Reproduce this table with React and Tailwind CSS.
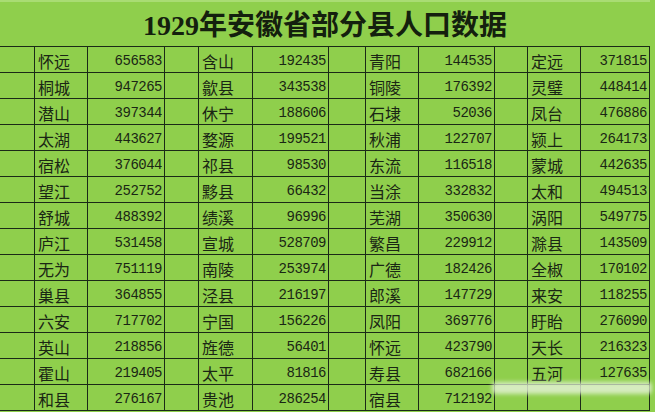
import React from "react";

const g1 = [["怀远","656583"],["桐城","947265"],["潜山","397344"],["太湖","443627"],["宿松","376044"],["望江","252752"],["舒城","488392"],["庐江","531458"],["无为","751119"],["巢县","364855"],["六安","717702"],["英山","218856"],["霍山","219405"],["和县","276167"]];
const g2 = [["含山","192435"],["歙县","343538"],["休宁","188606"],["婺源","199521"],["祁县","98530"],["黟县","66432"],["绩溪","96996"],["宣城","528709"],["南陵","253974"],["泾县","216197"],["宁国","156226"],["旌德","56401"],["太平","81816"],["贵池","286254"]];
const g3 = [["青阳","144535"],["铜陵","176392"],["石埭","52036"],["秋浦","122707"],["东流","116518"],["当涂","332832"],["芜湖","350630"],["繁昌","229912"],["广德","182426"],["郎溪","147729"],["凤阳","369776"],["怀远","423790"],["寿县","682166"],["宿县","712192"]];
const g4 = [["定远","371815"],["灵璧","448414"],["凤台","476886"],["颍上","264173"],["蒙城","442635"],["太和","494513"],["涡阳","549775"],["滁县","143509"],["全椒","170102"],["来安","118255"],["盱眙","276090"],["天长","216323"],["五河","127635"],["",""]];

const groups = [g1, g2, g3, g4];

const cell = "border-r border-b border-[#1b2a17] h-[26px] flex items-center overflow-hidden";
const nameCls = cell + " pl-[3px] pt-[2px] text-[16px] text-[#1a2614] [font-family:'Noto_Sans_CJK_SC','Noto_Sans',sans-serif]";
const numCls = cell + " justify-end pr-[2px] pt-[3px] text-[14px] tracking-[-0.5px] text-[#1a2614] [font-family:'Liberation_Mono',monospace]";

export default function App() {
  const rows = [];
  for (let r = 0; r < 14; r++) {
    groups.forEach((g, gi) => {
      rows.push(<div key={`b${r}-${gi}`} className={cell}></div>);
      rows.push(<div key={`n${r}-${gi}`} className={nameCls}>{g[r][0]}</div>);
      rows.push(<div key={`v${r}-${gi}`} className={numCls}>{g[r][1]}</div>);
    });
  }
  return (
    <div className="w-[655px] h-[412px] bg-[#8fcf4c] overflow-hidden relative">
      <div className="w-[650px] h-[46px] flex items-center justify-center border-t-2 border-[#a9dc73]">
        <div className="text-[28px] font-semibold text-[#14200e] pt-[4px] [font-family:'Liberation_Serif','Noto_Sans_CJK_SC',serif] leading-none">
          1929年安徽省部分县人口数据
        </div>
      </div>
      <div className="grid w-[650px] border-t border-[#1b2a17] grid-cols-[35px_53px_77px_34px_54px_76px_37px_53px_76px_33px_53px_69px]">
        {rows}
      </div>
      <div className="absolute left-[492px] top-[382px] w-[160px] h-[12px] bg-[#e8f3dc] opacity-80 blur-[2px] rounded-sm"></div>
    </div>
  );
}
